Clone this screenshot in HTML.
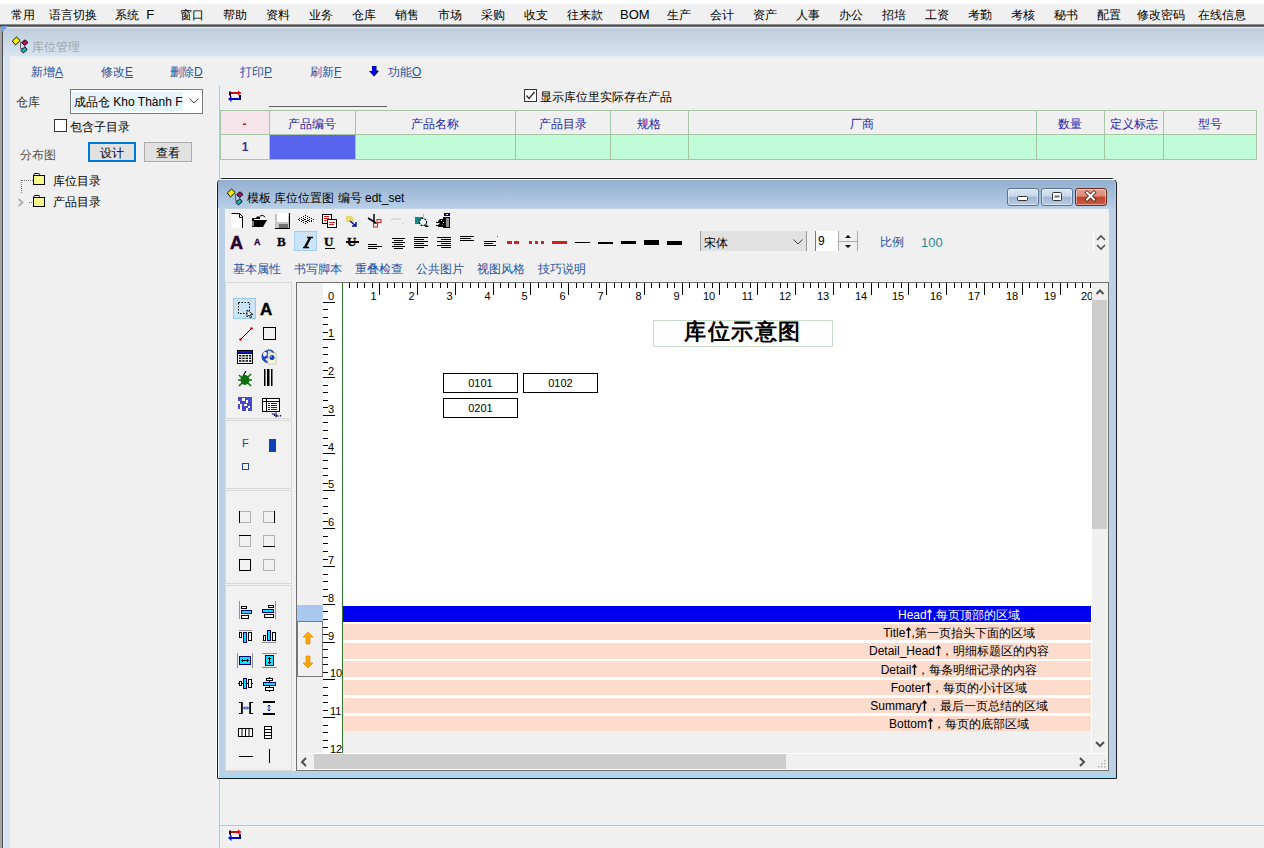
<!DOCTYPE html><html><head><meta charset="utf-8"><title>库位管理</title><style>
*{margin:0;padding:0;box-sizing:border-box}
html,body{width:1264px;height:848px;overflow:hidden;background:#f0f0f0;font-family:"Liberation Sans",sans-serif;font-size:12px;color:#000}
.a{position:absolute}
.t{line-height:12px;white-space:nowrap}
i.c{font-style:normal;font-family:"Liberation Sans",sans-serif;font-weight:normal;font-size:13px;letter-spacing:2.25px;-webkit-text-stroke:0.45px}
.cjk i.c{font-size:12px;letter-spacing:0;-webkit-text-stroke:0}
.cjk .tt{font:bold 22px/20px 'Liberation Serif',serif!important;letter-spacing:1.5px!important;-webkit-text-stroke:0!important}
u{text-decoration:underline}
b.ar{font-weight:normal;display:inline-block;position:relative;width:5px;height:11px;vertical-align:-1px;margin:0 0.5px}b.ar span{position:absolute;left:0;top:0;color:transparent;font-size:11px}b.ar svg{position:absolute;left:0;top:0}
svg{position:absolute;overflow:visible}
</style></head><body>
<div class=a style="left:0px;top:0px;width:1264px;height:4px;background:#fdfdfd;"></div>
<div class=a style="left:0px;top:4px;width:1264px;height:20px;background:#f0f0f0;"></div>
<div class="a t " style="left:11px;top:9px;font-size:13px"><i class=c>常用</i></div>
<div class="a t " style="left:49px;top:9px;font-size:13px"><i class=c>语言切换</i></div>
<div class="a t " style="left:115px;top:9px;font-size:13px"><i class=c>系统</i>&nbsp; F</div>
<div class="a t " style="left:180px;top:9px;font-size:13px"><i class=c>窗口</i></div>
<div class="a t " style="left:223px;top:9px;font-size:13px"><i class=c>帮助</i></div>
<div class="a t " style="left:266px;top:9px;font-size:13px"><i class=c>资料</i></div>
<div class="a t " style="left:309px;top:9px;font-size:13px"><i class=c>业务</i></div>
<div class="a t " style="left:352px;top:9px;font-size:13px"><i class=c>仓库</i></div>
<div class="a t " style="left:395px;top:9px;font-size:13px"><i class=c>销售</i></div>
<div class="a t " style="left:438px;top:9px;font-size:13px"><i class=c>市场</i></div>
<div class="a t " style="left:481px;top:9px;font-size:13px"><i class=c>采购</i></div>
<div class="a t " style="left:524px;top:9px;font-size:13px"><i class=c>收支</i></div>
<div class="a t " style="left:567px;top:9px;font-size:13px"><i class=c>往来款</i></div>
<div class="a t " style="left:620px;top:9px;font-size:13px">BOM</div>
<div class="a t " style="left:667px;top:9px;font-size:13px"><i class=c>生产</i></div>
<div class="a t " style="left:710px;top:9px;font-size:13px"><i class=c>会计</i></div>
<div class="a t " style="left:753px;top:9px;font-size:13px"><i class=c>资产</i></div>
<div class="a t " style="left:796px;top:9px;font-size:13px"><i class=c>人事</i></div>
<div class="a t " style="left:839px;top:9px;font-size:13px"><i class=c>办公</i></div>
<div class="a t " style="left:882px;top:9px;font-size:13px"><i class=c>招培</i></div>
<div class="a t " style="left:925px;top:9px;font-size:13px"><i class=c>工资</i></div>
<div class="a t " style="left:968px;top:9px;font-size:13px"><i class=c>考勤</i></div>
<div class="a t " style="left:1011px;top:9px;font-size:13px"><i class=c>考核</i></div>
<div class="a t " style="left:1054px;top:9px;font-size:13px"><i class=c>秘书</i></div>
<div class="a t " style="left:1097px;top:9px;font-size:13px"><i class=c>配置</i></div>
<div class="a t " style="left:1137px;top:9px;font-size:13px"><i class=c>修改密码</i></div>
<div class="a t " style="left:1198px;top:9px;font-size:13px"><i class=c>在线信息</i></div>
<div class=a style="left:0px;top:24px;width:1264px;height:1px;background:#8a8a8a;"></div>
<div class=a style="left:0px;top:25px;width:1264px;height:1px;background:#4e4e4e;"></div>
<div class=a style="left:0px;top:26px;width:1264px;height:1px;background:#6a6a6a;"></div>
<div class=a style="left:0px;top:27px;width:2px;height:821px;background:#a4a4a4;"></div>
<div class=a style="left:2px;top:27px;width:1px;height:821px;background:#4a4a4e;"></div>
<div class=a style="left:3px;top:27px;width:1px;height:821px;background:#e8f0fa;"></div>
<div class=a style="left:4px;top:27px;width:6px;height:821px;background:#d6e4f1;"></div>
<div class=a style="left:10px;top:57px;width:1px;height:791px;background:#eef0f4;"></div>
<div class=a style="left:3px;top:27px;width:1261px;height:1px;background:#e6eef6;"></div>
<div class=a style="left:3px;top:28px;width:1261px;height:29px;background:linear-gradient(#bdccdb,#d9e5f1);"></div>
<div class=a style="left:10px;top:56px;width:1254px;height:1px;background:#e4ecf4;"></div>
<svg style="left:2px;top:26px" width="6" height="6"><path d="M0 0H6L0 6Z" fill="#6f9bd8"/></svg>
<svg style="left:12px;top:36px" width="18" height="18" viewBox="0 0 18 18">
<path d="M8.5 6V12.5H10.5" stroke="#606060" fill="none" stroke-width="1"/>
<path d="M0.3 5L4.5 1L8.2 4.5L3.5 9Z" fill="#f4ec00" stroke="#000" stroke-width="0.9"/>
<path d="M9.6 6.6L13 3.8L16 6.5L12.7 9.6Z" fill="#b01060" stroke="#000" stroke-width="0.9"/>
<path d="M8.8 14.4L13 10.8L15.1 13.7L11.4 17Z" fill="#20b0b8" stroke="#000" stroke-width="0.9"/>
</svg>
<div class="a t " style="left:32px;top:41px;color:#9ca3ab"><i class=c>库位管理</i></div>
<div class="a t " style="left:31px;top:66px;color:#2553a3"><i class=c>新增</i><u>A</u></div>
<div class="a t " style="left:101px;top:66px;color:#2553a3"><i class=c>修改</i><u>E</u></div>
<div class="a t " style="left:170px;top:66px;color:#2553a3"><i class=c>删除</i><u>D</u></div>
<div class="a t " style="left:240px;top:66px;color:#2553a3"><i class=c>打印</i><u>P</u></div>
<div class="a t " style="left:310px;top:66px;color:#2553a3"><i class=c>刷新</i><u>F</u></div>
<svg style="left:369px;top:66px" width="10" height="11" viewBox="0 0 10 11"><path d="M3 0H7V5H10L5 10.5L0 5H3Z" fill="#0000e0"/><path d="M7 0V5H9L5 10" stroke="#000070" fill="none" stroke-width="1"/></svg>
<div class="a t " style="left:388px;top:66px;color:#2553a3"><i class=c>功能</i><u>O</u></div>
<div class="a t " style="left:16px;top:96px;color:#333"><i class=c>仓库</i></div>
<div class=a style="left:70px;top:89px;width:133px;height:25px;background:#fff;border:1px solid #7a7a7a"></div>
<div class=a style="left:72px;top:92px;width:111px;height:19px;background:#e5f3fb;"></div>
<div class="a t " style="left:74px;top:96px;color:#000"><i class=c>成品仓</i> Kho Thành F</div>
<div class=a style="left:183px;top:91px;width:18px;height:21px;background:#fff;"></div>
<svg style="left:189px;top:98px" width="10" height="6"><path d="M0.5 0.5L5 5L9.5 0.5" stroke="#404040" fill="none"/></svg>
<div class=a style="left:54px;top:119px;width:13px;height:13px;background:#fff;border:1px solid #333"></div>
<div class="a t " style="left:70px;top:121px;color:#000"><i class=c>包含子目录</i></div>
<div class="a t " style="left:20px;top:149px;color:#555"><i class=c>分布图</i></div>
<div class=a style="left:88px;top:142px;width:48px;height:20px;background:#e1e1e1;border:2px solid #0078d7"></div>
<div class="a t " style="left:100px;top:147px;"><i class=c>设计</i></div>
<div class=a style="left:144px;top:142px;width:48px;height:20px;background:#e1e1e1;border:1px solid #adadad"></div>
<div class="a t " style="left:156px;top:147px;"><i class=c>查看</i></div>
<svg style="left:0;top:0" width="60" height="220"><path d="M21.5 180V193M22 180.5H33M29 202.5H33" stroke="#707070" stroke-dasharray="1 1" fill="none"/><path d="M18.5 199L22.5 202.5L18.5 206" stroke="#b0b0b0" fill="none" stroke-width="1.8"/></svg>
<svg style="left:33px;top:173px" width="13" height="13" viewBox="0 0 13 13"><rect x="1" y="0.5" width="5.5" height="2" rx="0.8" fill="#fff" stroke="#000"/><rect x="0.5" y="2.5" width="11" height="9" fill="#f8f88a" stroke="#000"/></svg>
<div class="a t " style="left:53px;top:175px;"><i class=c>库位目录</i></div>
<svg style="left:33px;top:195px" width="13" height="13" viewBox="0 0 13 13"><rect x="1" y="0.5" width="5.5" height="2" rx="0.8" fill="#fff" stroke="#000"/><rect x="0.5" y="2.5" width="11" height="9" fill="#f8f88a" stroke="#000"/></svg>
<div class="a t " style="left:53px;top:196px;"><i class=c>产品目录</i></div>
<div class=a style="left:218px;top:86px;width:1px;height:762px;background:#e8f3fc;"></div>
<div class=a style="left:219px;top:86px;width:1px;height:762px;background:#b6c6d8;"></div>
<div class=a style="left:220px;top:824px;width:1044px;height:1px;background:#e8f3fc;"></div>
<div class=a style="left:220px;top:825px;width:1044px;height:1px;background:#b6c6d8;"></div>
<svg style="left:228px;top:90px" width="15" height="13" viewBox="0 0 15 13"><rect x="1" y="2" width="11" height="2" fill="#c01010"/><path d="M10 0.5L13.5 3L10 5.5Z" fill="#e01010"/><rect x="1" y="1.5" width="2" height="4" fill="#400000"/><rect x="2" y="8" width="11" height="2" fill="#0000c0"/><path d="M3.5 6L0 9L3.5 12Z" fill="#0010d0"/><rect x="11" y="5" width="2" height="5" fill="#000050"/><rect x="2" y="4" width="1" height="3" fill="#300030"/></svg>
<svg style="left:228px;top:829px" width="15" height="13" viewBox="0 0 15 13"><rect x="1" y="2" width="11" height="2" fill="#c01010"/><path d="M10 0.5L13.5 3L10 5.5Z" fill="#e01010"/><rect x="1" y="1.5" width="2" height="4" fill="#400000"/><rect x="2" y="8" width="11" height="2" fill="#0000c0"/><path d="M3.5 6L0 9L3.5 12Z" fill="#0010d0"/><rect x="11" y="5" width="2" height="5" fill="#000050"/><rect x="2" y="4" width="1" height="3" fill="#300030"/></svg>
<div class=a style="left:269px;top:106px;width:118px;height:1px;background:#606060;"></div>
<div class=a style="left:524px;top:89px;width:13px;height:13px;background:#fff;border:1px solid #333"></div>
<svg style="left:524px;top:89px" width="13" height="13"><path d="M2.5 6.5L5 9.5L10.5 3" stroke="#222" stroke-width="1.2" fill="none"/></svg>
<div class="a t " style="left:540px;top:91px;"><i class=c>显示库位里实际存在产品</i></div>
<div class=a style="left:221px;top:111px;width:48px;height:23px;background:#f6e4eb;"></div>
<div class=a style="left:270px;top:135px;width:85px;height:24px;background:#5964ee;"></div>
<div class=a style="left:356px;top:135px;width:900px;height:24px;background:#c0fcd8;"></div>
<div class=a style="left:220px;top:110px;width:1px;height:50px;background:#a6c6a6;"></div>
<div class=a style="left:269px;top:110px;width:1px;height:50px;background:#a6c6a6;"></div>
<div class=a style="left:355px;top:110px;width:1px;height:50px;background:#a6c6a6;"></div>
<div class=a style="left:515px;top:110px;width:1px;height:50px;background:#a6c6a6;"></div>
<div class=a style="left:610px;top:110px;width:1px;height:50px;background:#a6c6a6;"></div>
<div class=a style="left:688px;top:110px;width:1px;height:50px;background:#a6c6a6;"></div>
<div class=a style="left:1036px;top:110px;width:1px;height:50px;background:#a6c6a6;"></div>
<div class=a style="left:1104px;top:110px;width:1px;height:50px;background:#a6c6a6;"></div>
<div class=a style="left:1163px;top:110px;width:1px;height:50px;background:#a6c6a6;"></div>
<div class=a style="left:1256px;top:110px;width:1px;height:50px;background:#a6c6a6;"></div>
<div class=a style="left:220px;top:110px;width:1037px;height:1px;background:#a6c6a6;"></div>
<div class=a style="left:220px;top:134px;width:1037px;height:1px;background:#a6c6a6;"></div>
<div class=a style="left:220px;top:159px;width:1037px;height:1px;background:#a6c6a6;"></div>
<div class="a t" style="left:220px;top:118px;width:49px;text-align:center;color:#c02020;font-weight:bold">-</div>
<div class="a t" style="left:269px;top:118px;width:86px;text-align:center;color:#2a20a8"><i class=c>产品编号</i></div>
<div class="a t" style="left:355px;top:118px;width:160px;text-align:center;color:#2a20a8"><i class=c>产品名称</i></div>
<div class="a t" style="left:515px;top:118px;width:95px;text-align:center;color:#2a20a8"><i class=c>产品目录</i></div>
<div class="a t" style="left:610px;top:118px;width:78px;text-align:center;color:#2a20a8"><i class=c>规格</i></div>
<div class="a t" style="left:688px;top:118px;width:348px;text-align:center;color:#2a20a8"><i class=c>厂商</i></div>
<div class="a t" style="left:1036px;top:118px;width:68px;text-align:center;color:#2a20a8"><i class=c>数量</i></div>
<div class="a t" style="left:1104px;top:118px;width:59px;text-align:center;color:#2a20a8"><i class=c>定义标志</i></div>
<div class="a t" style="left:1163px;top:118px;width:93px;text-align:center;color:#2a20a8"><i class=c>型号</i></div>
<div class="a t" style="left:221px;top:141px;width:48px;text-align:center;color:#3a3090;font-weight:bold">1</div>
<div class=a style="left:223px;top:177px;width:888px;height:1px;background:#fbfbfb;"></div>
<div class=a style="left:216px;top:184px;width:1px;height:594px;background:#fbfdff;"></div>
<div class=a style="left:217px;top:178px;width:900px;height:601px;border:1px solid #1c1c1c;border-radius:6px 6px 1px 1px;background:#bad1e8;box-shadow:inset 1px 1px 0 #f4f9ff, inset -1px 0 0 #9fdcf6"></div>
<div class=a style="left:218px;top:179px;width:898px;height:1px;background:#f4f9ff;"></div>
<div class=a style="left:218px;top:180px;width:897px;height:28px;background:linear-gradient(#93aecf,#b7cee7);border-radius:4px 4px 0 0"></div>
<div class=a style="left:219px;top:208px;width:896px;height:1px;background:#c0d2e6;"></div>
<div class=a style="left:225px;top:209px;width:884px;height:562px;background:#f0f0f0;"></div>
<div class=a style="left:225px;top:209px;width:884px;height:1px;background:#eef2fa;"></div>
<svg style="left:227px;top:188px" width="18" height="18" viewBox="0 0 18 18">
<path d="M8.5 6V12.5H10.5" stroke="#606060" fill="none" stroke-width="1"/>
<path d="M0.3 5L4.5 1L8.2 4.5L3.5 9Z" fill="#f4ec00" stroke="#000" stroke-width="0.9"/>
<path d="M9.6 6.6L13 3.8L16 6.5L12.7 9.6Z" fill="#b01060" stroke="#000" stroke-width="0.9"/>
<path d="M8.8 14.4L13 10.8L15.1 13.7L11.4 17Z" fill="#20b0b8" stroke="#000" stroke-width="0.9"/>
</svg>
<div class="a t " style="left:247px;top:192px;"><i class=c>模板</i> <i class=c>库位位置图</i> <i class=c>编号</i> edt_set</div>
<div class=a style="left:1007px;top:188px;width:32px;height:18px;background:linear-gradient(#dbe6f3 0%,#c8d8ea 45%,#9fb7d3 50%,#b9cde4 100%);border:1px solid #5c7394;border-radius:3px;box-shadow:inset 0 0 0 1px rgba(255,255,255,.45)"></div>
<div class=a style="left:1041px;top:188px;width:32px;height:18px;background:linear-gradient(#dbe6f3 0%,#c8d8ea 45%,#9fb7d3 50%,#b9cde4 100%);border:1px solid #5c7394;border-radius:3px;box-shadow:inset 0 0 0 1px rgba(255,255,255,.45)"></div>
<div class=a style="left:1075px;top:188px;width:32px;height:18px;background:linear-gradient(#e6a193 0%,#d88a78 45%,#c0442a 50%,#c85a40 100%);border:1px solid #6a2a20;border-radius:3px;box-shadow:inset 0 0 0 1px rgba(255,255,255,.45)"></div>
<svg style="left:1017px;top:196px" width="12" height="6"><rect x="0.5" y="0.5" width="10" height="4" rx="1" fill="#fff" stroke="#333"/></svg>
<svg style="left:1051px;top:192px" width="12" height="10"><rect x="1.5" y="0.5" width="9" height="8" rx="1" fill="#fff" stroke="#333"/><rect x="3.5" y="3.5" width="5" height="2" fill="#5a6f8a"/></svg>
<svg style="left:1084px;top:190px" width="14" height="12"><path d="M3 2.5L10 9.5M10 2.5L3 9.5" stroke="#4a1a10" stroke-width="3.6" stroke-linecap="square"/><path d="M3 2.5L10 9.5M10 2.5L3 9.5" stroke="#fff" stroke-width="2" stroke-linecap="square"/></svg>
<div class=a style="left:1093px;top:232px;width:1px;height:20px;background:#ffffff;"></div>
<svg style="left:1096px;top:234px" width="10" height="18"><path d="M1 6L5 2L9 6M1 11L5 15L9 11" stroke="#505050" stroke-width="1.6" fill="none"/></svg>
<svg style="left:231px;top:213px" width="13" height="16" viewBox="0 0 13 16"><path d="M0.5 1.5H8.5L11.5 4.5V14.5H0.5Z" fill="#fff"/><path d="M0.5 0.5H8.5M8.5 0.5V4.5H12M8.5 0.5L12 4M11.5 4V15" stroke="#000" fill="none"/></svg>
<svg style="left:251px;top:214px" width="17" height="14" viewBox="0 0 17 14"><path d="M1 4H5L6 2.5H9V5H14L11 13H1Z" fill="#000"/><path d="M3 6H16L12 13H1Z" fill="#000"/><path d="M3 5.5H15" stroke="#fff"/><path d="M9 2Q12 0 14 3" stroke="#000" fill="none"/><path d="M2 7V12" stroke="#fff"/></svg>
<svg style="left:275px;top:213px" width="16" height="16" viewBox="0 0 16 16"><rect x="0" y="1" width="15" height="14" fill="#c4c4c4"/><rect x="2" y="0" width="11" height="9" fill="#fff"/><rect x="4" y="11" width="9" height="4" fill="#707070"/><path d="M14.5 0V15.5H0" stroke="#000" fill="none"/></svg>
<svg style="left:298px;top:215px" width="16" height="10" viewBox="0 0 16 10"><g fill="#000"><rect x="7" y="0" width="1" height="1"/><rect x="5" y="1" width="1" height="1"/><rect x="9" y="1" width="1" height="1"/><rect x="3" y="2" width="1" height="1"/><rect x="7" y="2" width="1" height="1"/><rect x="11" y="2" width="1" height="1"/><rect x="1" y="3" width="1" height="1"/><rect x="5" y="3" width="1" height="1"/><rect x="9" y="3" width="1" height="1"/><rect x="13" y="3" width="1" height="1"/><rect x="0" y="4" width="1" height="1"/><rect x="3" y="4" width="1" height="1"/><rect x="7" y="4" width="1" height="1"/><rect x="11" y="4" width="1" height="1"/><rect x="15" y="4" width="1" height="1"/><rect x="1" y="5" width="1" height="1"/><rect x="5" y="5" width="1" height="1"/><rect x="9" y="5" width="1" height="1"/><rect x="13" y="5" width="1" height="1"/><rect x="3" y="6" width="1" height="1"/><rect x="7" y="6" width="1" height="1"/><rect x="11" y="6" width="1" height="1"/><rect x="5" y="7" width="1" height="1"/><rect x="9" y="7" width="1" height="1"/><rect x="13" y="6" width="1" height="1"/><rect x="7" y="8" width="1" height="1"/><rect x="4" y="5" width="1" height="1"/><rect x="10" y="5" width="1" height="1"/><rect x="6" y="4" width="1" height="1"/><rect x="8" y="6" width="1" height="1"/></g></svg>
<svg style="left:322px;top:214px" width="15" height="14" viewBox="0 0 15 14"><rect x="0.5" y="0.5" width="9" height="9" fill="#fff" stroke="#000"/><path d="M2 2.5H7M2 4.5H7M2 6.5H5" stroke="#d02020"/><rect x="5.5" y="5.5" width="9" height="8" fill="#fff" stroke="#000"/><path d="M7 8.5H13M7 10.5H12" stroke="#d02020"/></svg>
<svg style="left:346px;top:216px" width="11" height="11" viewBox="0 0 11 11"><path d="M0 0H6L8 3V6H0Z" fill="#e8d870"/><path d="M4 5L10 10M6 10H10V6" stroke="#0010a0" stroke-width="1.5" fill="none"/></svg>
<svg style="left:368px;top:214px" width="14" height="14" viewBox="0 0 14 14"><path d="M6 0V9M0 4L8 9" stroke="#000" stroke-width="1.5"/><rect x="9" y="5.5" width="4" height="3" fill="none" stroke="#d02020"/><rect x="5.5" y="9.5" width="4" height="3.5" fill="none" stroke="#d02020"/></svg>
<svg style="left:391px;top:218px" width="14" height="7" viewBox="0 0 14 7"><path d="M0 3L2 1H10M12 4V6" stroke="#c8c8c8" fill="none"/></svg>
<svg style="left:414px;top:214px" width="15" height="15" viewBox="0 0 15 15"><rect x="1" y="3" width="8" height="7" fill="#108888"/><path d="M9.5 0V3" stroke="#b0b0b0"/><circle cx="9" cy="8" r="3.6" fill="#e8fafa" stroke="#000" stroke-width="1.1" stroke-dasharray="2 1"/><path d="M11.5 10.5L13.5 12.5H11" stroke="#000" stroke-width="1.2" fill="none"/></svg>
<svg style="left:435px;top:213px" width="16" height="16" viewBox="0 0 16 16"><path d="M9 0H15V3H9Z" fill="#000070"/><rect x="11" y="1" width="2" height="1" fill="#fff"/><path d="M8 4H15V15H8Z" fill="#000"/><rect x="11" y="5" width="3" height="9" fill="#909090"/><path d="M5 6H9V10L7 12H8V14H3V12L5 10H3V8Z" fill="#000"/><rect x="6" y="7" width="1" height="1" fill="#fff"/><rect x="8" y="9" width="1" height="1" fill="#fff"/><rect x="1" y="9" width="2" height="1" fill="#000"/><rect x="1" y="12" width="2" height="1" fill="#000"/></svg>
<div class=a style="left:294px;top:231px;width:23px;height:20px;background:#cce4f7;border:1px solid #a6cdee"></div>
<div class="a" style="left:230px;top:235px;font:bold 18px/16px 'Liberation Sans',sans-serif;color:#1a0028;-webkit-text-stroke:0.6px #400040">A</div>
<div class="a" style="left:254px;top:238px;font:bold 9px/9px 'Liberation Sans',sans-serif;color:#300040;-webkit-text-stroke:0.3px">A</div>
<div class="a" style="left:277px;top:236px;font:bold 13px/12px 'Liberation Serif',serif;color:#000;-webkit-text-stroke:0.3px">B</div>
<svg style="left:302px;top:237px" width="12" height="11" viewBox="0 0 12 11"><path d="M5 0.5H11M1 10.5H7M8.5 0.5L3.5 10.5" stroke="#000" stroke-width="1.4" fill="none"/><path d="M8 1L3 10" stroke="#000" stroke-width="2.2"/></svg>
<div class="a" style="left:324px;top:236px;font:bold 13px/12px 'Liberation Serif',serif;color:#000;-webkit-text-stroke:0.3px">U</div>
<div class=a style="left:325px;top:248px;width:10px;height:1px;background:#000;"></div>
<div class="a" style="left:347px;top:236px;font:bold 13px/12px 'Liberation Serif',serif;color:#000;-webkit-text-stroke:0.3px">U</div>
<div class=a style="left:346px;top:241px;width:13px;height:2px;background:#000;"></div>
<svg style="left:368px;top:244px" width="14" height="6" viewBox="0 0 14 6"><path d="M0 0.5H9M0 2.5H14M0 4.5H9" stroke="#000"/></svg>
<svg style="left:391px;top:238px" width="14" height="11" viewBox="0 0 14 11"><path d="M1 0.5H14M3 2.5H12M1 4.5H14M3 6.5H12M1 8.5H14M3 10.5H12" stroke="#000"/></svg>
<svg style="left:414px;top:237px" width="14" height="11" viewBox="0 0 14 11"><path d="M0 0.5H14M0 2.5H10M0 4.5H14M0 6.5H10M0 8.5H14M0 10.5H10" stroke="#000"/></svg>
<svg style="left:437px;top:237px" width="14" height="11" viewBox="0 0 14 11"><path d="M0 0.5H14M4 2.5H14M0 4.5H14M4 6.5H14M0 8.5H14M4 10.5H14" stroke="#000"/></svg>
<svg style="left:460px;top:236px" width="14" height="6" viewBox="0 0 14 6"><path d="M0 0.5H14M0 2.5H11M0 4.5H14" stroke="#000"/></svg>
<svg style="left:484px;top:240px" width="13" height="7" viewBox="0 0 13 7"><path d="M0 1.5H12M0 3.5H9M0 5.5H12" stroke="#000"/></svg>
<div class=a style="left:497px;top:236px;width:1px;height:1px;background:#c01080;"></div>
<svg style="left:507px;top:241px" width="12" height="3" viewBox="0 0 12 3"><rect x="0" y="0" width="5" height="3" fill="#d02020"/><rect x="7" y="0" width="5" height="3" fill="#d02020"/></svg>
<svg style="left:529px;top:241px" width="15" height="3" viewBox="0 0 15 3"><rect x="0" y="0" width="3" height="3" fill="#d02020"/><rect x="6" y="0" width="3" height="3" fill="#d02020"/><rect x="12" y="0" width="3" height="3" fill="#d02020"/></svg>
<div class=a style="left:552px;top:241px;width:15px;height:3px;background:#d02020;"></div>
<div class=a style="left:575px;top:242px;width:15px;height:1px;background:#000;"></div>
<div class=a style="left:598px;top:242px;width:15px;height:2px;background:#000;"></div>
<div class=a style="left:621px;top:241px;width:15px;height:3px;background:#000;"></div>
<div class=a style="left:644px;top:240px;width:15px;height:5px;background:#000;"></div>
<div class=a style="left:667px;top:241px;width:15px;height:4px;background:#000;"></div>
<div class=a style="left:700px;top:231px;width:107px;height:20px;background:#e1e1e1;border-left:1px solid #9a9a9a;border-right:1px solid #9a9a9a"></div>
<div class="a t" style="left:704px;top:237px;font-weight:bold"><i class=c>宋体</i></div>
<svg style="left:793px;top:239px" width="10" height="6" viewBox="0 0 10 6"><path d="M0.5 0.5L5 5L9.5 0.5" stroke="#404040" fill="none"/></svg>
<div class=a style="left:815px;top:231px;width:23px;height:20px;background:#fff;border-left:1px solid #7a7a7a"></div>
<div class="a t " style="left:818px;top:235px;">9</div>
<div class=a style="left:838px;top:231px;width:20px;height:20px;background:#f0f0f0;border-left:1px solid #aaa;border-right:1px solid #aaa"></div>
<div class=a style="left:839px;top:241px;width:18px;height:1px;background:#aaa;"></div>
<svg style="left:844px;top:234px" width="8" height="5" viewBox="0 0 8 5"><path d="M1 4L4 1L7 4Z" fill="#000"/></svg>
<svg style="left:844px;top:244px" width="8" height="5" viewBox="0 0 8 5"><path d="M1 1L4 4L7 1Z" fill="#000"/></svg>
<div class="a t " style="left:880px;top:236px;color:#2553a3"><i class=c>比例</i></div>
<div class="a t " style="left:921px;top:237px;color:#2a8a90;font-size:13px">100</div>
<div class="a t " style="left:233px;top:263px;color:#2553a3"><i class=c>基本属性</i></div>
<div class="a t " style="left:294px;top:263px;color:#2553a3"><i class=c>书写脚本</i></div>
<div class="a t " style="left:355px;top:263px;color:#2553a3"><i class=c>重叠检查</i></div>
<div class="a t " style="left:416px;top:263px;color:#2553a3"><i class=c>公共图片</i></div>
<div class="a t " style="left:477px;top:263px;color:#2553a3"><i class=c>视图风格</i></div>
<div class="a t " style="left:538px;top:263px;color:#2553a3"><i class=c>技巧说明</i></div>
<div class=a style="left:225px;top:282px;width:67px;height:137px;border:1px solid #d8d8d8;background:#f1f1f1"></div>
<div class=a style="left:225px;top:420px;width:67px;height:69px;border:1px solid #d8d8d8;background:#f1f1f1"></div>
<div class=a style="left:225px;top:490px;width:67px;height:94px;border:1px solid #d8d8d8;background:#f1f1f1"></div>
<div class=a style="left:225px;top:585px;width:67px;height:186px;border:1px solid #d8d8d8;background:#f1f1f1"></div>
<div class=a style="left:233px;top:298px;width:23px;height:21px;background:#cce4f7;border:1px solid #99c9ef"></div>
<svg style="left:238px;top:302px" width="16" height="16" viewBox="0 0 16 16"><rect x="0.5" y="0.5" width="11" height="11" fill="none" stroke="#000" stroke-dasharray="1.5 1.5"/><path d="M9 8V15L11 13L12.5 16L13.5 15.5L12.5 12.5H15Z" fill="#fff" stroke="#000" stroke-width="0.8"/></svg>
<div class="a" style="left:260px;top:302px;font:bold 17px/15px 'Liberation Sans',sans-serif;color:#000;-webkit-text-stroke:0.4px">A</div>
<svg style="left:239px;top:327px" width="14" height="14" viewBox="0 0 14 14"><path d="M1.5 12.5L12.5 1.5" stroke="#000"/><circle cx="1.5" cy="12.5" r="1.3" fill="#c01010"/><circle cx="12.5" cy="1.5" r="1.3" fill="#c01010"/></svg>
<svg style="left:263px;top:327px" width="14" height="13" viewBox="0 0 14 13"><rect x="0.5" y="0.5" width="12" height="12" fill="none" stroke="#000"/></svg>
<svg style="left:237px;top:350px" width="17" height="15" viewBox="0 0 17 15"><rect x="0.5" y="0.5" width="15" height="13" fill="#fff" stroke="#000"/><rect x="1" y="1" width="14" height="2" fill="#1018c0"/><rect x="1" y="3" width="14" height="1" fill="#000"/><rect x="2.0" y="5.0" width="2.4" height="1.5" fill="#000"/><rect x="5.3" y="5.0" width="2.4" height="1.5" fill="#000"/><rect x="8.6" y="5.0" width="2.4" height="1.5" fill="#000"/><rect x="11.9" y="5.0" width="2.4" height="1.5" fill="#000"/><rect x="2.0" y="7.6" width="2.4" height="1.5" fill="#000"/><rect x="5.3" y="7.6" width="2.4" height="1.5" fill="#000"/><rect x="8.6" y="7.6" width="2.4" height="1.5" fill="#000"/><rect x="11.9" y="7.6" width="2.4" height="1.5" fill="#000"/><rect x="2.0" y="10.2" width="2.4" height="1.5" fill="#000"/><rect x="5.3" y="10.2" width="2.4" height="1.5" fill="#000"/><rect x="8.6" y="10.2" width="2.4" height="1.5" fill="#000"/><rect x="11.9" y="10.2" width="2.4" height="1.5" fill="#000"/></svg>
<svg style="left:261px;top:349px" width="16" height="16" viewBox="0 0 16 16"><path d="M7 1A6.5 6.5 0 1 0 7 14Z" fill="#2040d0"/><path d="M3 3Q6 2 6 6L3 8Q1 5 3 3Z" fill="#f0f0ff"/><path d="M4 10L7 9V13Z" fill="#fff"/><path d="M7 1Q11 1 13 4" stroke="#3060a0" stroke-width="1.5" fill="none"/><rect x="7" y="4" width="8" height="11" fill="#fbf6d0" stroke="#b0b0b0" stroke-width="0.6"/><circle cx="11" cy="8.5" r="2.5" fill="#1040c0"/><circle cx="10.3" cy="7.8" r="0.8" fill="#a0c0ff"/></svg>
<svg style="left:238px;top:371px" width="14" height="16" viewBox="0 0 14 16"><path d="M8 0L5 5" stroke="#000" stroke-width="1.2"/><ellipse cx="7" cy="9" rx="4.5" ry="5" fill="#107010"/><path d="M1 4L4 7M13 3L10 6M0 9H3M11 9H14M1 15L4 12M13 15L10 12" stroke="#107010" stroke-width="1.6"/></svg>
<svg style="left:264px;top:369px" width="9" height="17" viewBox="0 0 9 17"><rect x="0" y="0" width="1.5" height="17" fill="#000"/><rect x="3" y="0" width="2.5" height="17" fill="#000"/><rect x="7" y="0" width="1.5" height="17" fill="#000"/></svg>
<svg style="left:238px;top:397px" width="14" height="14" viewBox="0 0 14 14"><rect x="0" y="0" width="14" height="14" fill="#4848c8"/><rect x="0" y="4" width="2" height="3" fill="#fff"/><rect x="4" y="1" width="3" height="3" fill="#fff"/><rect x="8" y="3" width="2" height="3" fill="#fff"/><rect x="2" y="7" width="2" height="7" fill="#fff"/><rect x="6" y="7" width="3" height="2" fill="#fff"/><rect x="10" y="9" width="2" height="2" fill="#fff"/><rect x="0" y="12" width="2" height="2" fill="#f0f0f0"/><rect x="8" y="11" width="2" height="3" fill="#fff"/></svg>
<svg style="left:262px;top:398px" width="19" height="20" viewBox="0 0 19 20"><rect x="0.5" y="0.5" width="17" height="13" fill="#fff" stroke="#000"/><path d="M1 3.5H17M4.5 1V13" stroke="#000"/><path d="M6 5.5H8M9 5.5H15M6 7.5H8M9 7.5H15M6 9.5H8M9 9.5H15M6 11.5H8M9 11.5H15" stroke="#1a1a8a"/><path d="M10 16.5Q11 15 12.5 16.5V18M14 14.5V18.5Q16 17 16.5 18.5M18.5 17V18.5" stroke="#101060" stroke-width="1.2" fill="none"/></svg>
<div class="a" style="left:242px;top:437px;font:11px/13px 'Liberation Sans',sans-serif;color:#2040a0">F</div>
<div class=a style="left:269px;top:439px;width:7px;height:13px;background:#1040b8;"></div>
<svg style="left:242px;top:463px" width="7" height="8" viewBox="0 0 7 8"><rect x="0.5" y="0.5" width="6" height="6" fill="none" stroke="#2040a0"/></svg>
<svg style="left:239px;top:511px" width="13" height="13" viewBox="0 0 13 13"><rect x="0.5" y="0.5" width="11" height="11" fill="none" stroke="#707070" stroke-dasharray="1 1"/><path d="M0.5 0V12" stroke="#000"/></svg>
<svg style="left:263px;top:511px" width="13" height="13" viewBox="0 0 13 13"><rect x="0.5" y="0.5" width="11" height="11" fill="none" stroke="#707070" stroke-dasharray="1 1"/><path d="M11.5 0V12" stroke="#000"/></svg>
<svg style="left:239px;top:535px" width="13" height="13" viewBox="0 0 13 13"><rect x="0.5" y="0.5" width="11" height="11" fill="none" stroke="#707070" stroke-dasharray="1 1"/><path d="M0 0.5H12" stroke="#000"/></svg>
<svg style="left:263px;top:535px" width="13" height="13" viewBox="0 0 13 13"><rect x="0.5" y="0.5" width="11" height="11" fill="none" stroke="#707070" stroke-dasharray="1 1"/><path d="M0 11.5H12" stroke="#000"/></svg>
<svg style="left:239px;top:559px" width="13" height="13" viewBox="0 0 13 13"><rect x="0.5" y="0.5" width="11" height="11" fill="none" stroke="#707070" stroke-dasharray="1 1"/><path d="M0.5 0V12" stroke="#000"/><path d="M11.5 0V12" stroke="#000"/><path d="M0 0.5H12" stroke="#000"/><path d="M0 11.5H12" stroke="#000"/></svg>
<svg style="left:263px;top:559px" width="13" height="13" viewBox="0 0 13 13"><rect x="0.5" y="0.5" width="11" height="11" fill="none" stroke="#707070" stroke-dasharray="1 1"/></svg>
<svg style="left:239px;top:605px" width="15" height="15" viewBox="0 0 15 15"><path d="M0.5 -4V14" stroke="#909090"/><rect x="2.5" y="1.5" width="5.0" height="2.0" fill="#fff" stroke="#000"/><rect x="2.5" y="5.5" width="10.0" height="3.0" fill="#10e0ff" stroke="#000070"/><rect x="2.5" y="10.5" width="7.0" height="3.0" fill="#fff" stroke="#000"/></svg>
<svg style="left:262px;top:605px" width="15" height="15" viewBox="0 0 15 15"><path d="M13.5 -4V14" stroke="#909090"/><rect x="6.5" y="0.5" width="5.0" height="2.0" fill="#fff" stroke="#000"/><rect x="0.5" y="4.5" width="11.0" height="3.0" fill="#10e0ff" stroke="#000070"/><rect x="2.5" y="9.5" width="9.0" height="3.0" fill="#fff" stroke="#000"/></svg>
<svg style="left:239px;top:630px" width="15" height="15" viewBox="0 0 15 15"><path d="M0 0.5H13" stroke="#909090"/><rect x="0.5" y="2.5" width="2.0" height="5.0" fill="#fff" stroke="#000"/><rect x="4.5" y="2.5" width="3.0" height="10.0" fill="#10e0ff" stroke="#000070"/><rect x="9.5" y="2.5" width="3.0" height="8.0" fill="#fff" stroke="#000"/></svg>
<svg style="left:262px;top:630px" width="15" height="15" viewBox="0 0 15 15"><path d="M0 12.5H14" stroke="#909090"/><rect x="1.5" y="5.5" width="2.0" height="5.0" fill="#fff" stroke="#000"/><rect x="5.5" y="0.5" width="3.0" height="10.0" fill="#10e0ff" stroke="#000070"/><rect x="10.5" y="2.5" width="3.0" height="8.0" fill="#fff" stroke="#000"/></svg>
<svg style="left:237px;top:653px" width="17" height="16" viewBox="0 0 17 16"><path d="M0.5 0V15M15.5 0V15" stroke="#909090"/><rect x="2.5" y="3.5" width="11.0" height="8.0" fill="#10e0ff" stroke="#000070"/><path d="M4.5 7.5H11.5M6 6L4.5 7.5L6 9M10 6L11.5 7.5L10 9" stroke="#000" fill="none"/></svg>
<svg style="left:262px;top:653px" width="16" height="16" viewBox="0 0 16 16"><path d="M0 0.5H15M0 14.5H15" stroke="#909090"/><rect x="3.5" y="2.5" width="8.0" height="10.0" fill="#10e0ff" stroke="#000070"/><path d="M7.5 4.5V10.5M6 6L7.5 4.5L9 6M6 9L7.5 10.5L9 9" stroke="#000" fill="none"/></svg>
<svg style="left:238px;top:678px" width="16" height="12" viewBox="0 0 16 12"><path d="M0 5.5H15" stroke="#000"/><rect x="1.5" y="3.5" width="2.0" height="4.0" fill="#fff" stroke="#000"/><rect x="5.5" y="0.5" width="3.0" height="10.0" fill="#10e0ff" stroke="#000070"/><rect x="10.5" y="1.5" width="3.0" height="8.0" fill="#fff" stroke="#000"/></svg>
<svg style="left:262px;top:677px" width="15" height="16" viewBox="0 0 15 16"><path d="M7.5 0V15" stroke="#000"/><rect x="4.5" y="1.5" width="6.0" height="2.0" fill="#fff" stroke="#000"/><rect x="1.5" y="5.5" width="12.0" height="3.0" fill="#10e0ff" stroke="#000070"/><rect x="3.5" y="10.5" width="8.0" height="3.0" fill="#fff" stroke="#000"/></svg>
<svg style="left:239px;top:701px" width="14" height="14" viewBox="0 0 14 14"><path d="M0 1.5H3V12.5H0M14 1.5H11V12.5H14" stroke="#000" stroke-width="1.2" fill="none"/><rect x="2" y="1" width="1.5" height="12" fill="#000"/><rect x="10.5" y="1" width="1.5" height="12" fill="#000"/><path d="M5 7H9M6 5.5L4.5 7L6 8.5M8 5.5L9.5 7L8 8.5" stroke="#1030a0" fill="none"/></svg>
<svg style="left:262px;top:701px" width="14" height="14" viewBox="0 0 14 14"><rect x="1" y="0" width="12" height="2" fill="#000"/><rect x="1" y="12" width="12" height="2" fill="#000"/><path d="M7 4V10M5.5 5.5L7 4L8.5 5.5M5.5 8.5L7 10L8.5 8.5" stroke="#1030a0" fill="none"/></svg>
<svg style="left:238px;top:728px" width="16" height="10" viewBox="0 0 16 10"><rect x="0.5" y="0.5" width="14" height="8" fill="#fff" stroke="#000"/><path d="M4 1V9M7.5 1V9M11 1V9" stroke="#000"/></svg>
<svg style="left:264px;top:726px" width="9" height="13" viewBox="0 0 9 13"><rect x="0.5" y="0.5" width="7" height="12" fill="#fff" stroke="#000"/><path d="M1 3.5H8M1 6.5H8M1 9.5H8" stroke="#000"/></svg>
<div class=a style="left:239px;top:756px;width:14px;height:1px;background:#000;"></div>
<div class=a style="left:269px;top:749px;width:1px;height:14px;background:#000;"></div>
<div class=a style="left:296px;top:282px;width:813px;height:489px;background:#fff;border:1px solid #707070"></div>
<div class=a style="left:297px;top:283px;width:26px;height:470px;background:#f0f0f0;"></div>
<div class=a style="left:343px;top:731px;width:749px;height:22px;background:#f0f0f0;"></div>
<div class=a style="left:342px;top:283px;width:1px;height:470px;background:#2f7a2f;"></div>
<svg style="left:0;top:0" width="1264" height="848"><path d="M349.5 283V288M357.5 283V288M364.5 283V288M372.5 283V288M379.5 283V295M387.5 283V288M394.5 283V288M402.5 283V288M410.5 283V288M417.5 283V295M425.5 283V288M432.5 283V288M440.5 283V288M447.5 283V288M455.5 283V295M462.5 283V288M470.5 283V288M478.5 283V288M485.5 283V288M493.5 283V295M500.5 283V288M508.5 283V288M515.5 283V288M523.5 283V288M530.5 283V295M538.5 283V288M546.5 283V288M553.5 283V288M561.5 283V288M568.5 283V295M576.5 283V288M583.5 283V288M591.5 283V288M599.5 283V288M606.5 283V295M614.5 283V288M621.5 283V288M629.5 283V288M636.5 283V288M644.5 283V295M651.5 283V288M659.5 283V288M667.5 283V288M674.5 283V288M682.5 283V295M689.5 283V288M697.5 283V288M704.5 283V288M712.5 283V288M719.5 283V295M727.5 283V288M735.5 283V288M742.5 283V288M750.5 283V288M757.5 283V295M765.5 283V288M772.5 283V288M780.5 283V288M787.5 283V288M795.5 283V295M803.5 283V288M810.5 283V288M818.5 283V288M825.5 283V288M833.5 283V295M840.5 283V288M848.5 283V288M856.5 283V288M863.5 283V288M871.5 283V295M878.5 283V288M886.5 283V288M893.5 283V288M901.5 283V288M908.5 283V295M916.5 283V288M924.5 283V288M931.5 283V288M939.5 283V288M946.5 283V295M954.5 283V288M961.5 283V288M969.5 283V288M976.5 283V288M984.5 283V295M992.5 283V288M999.5 283V288M1007.5 283V288M1014.5 283V288M1022.5 283V295M1029.5 283V288M1037.5 283V288M1044.5 283V288M1052.5 283V288M1060.5 283V295M1067.5 283V288M1075.5 283V288M1082.5 283V288M1090.5 283V288M323 302.5H335M323 309.5H328M323 317.5H328M323 324.5H328M323 332.5H328M323 339.5H335M323 347.5H328M323 354.5H328M323 362.5H328M323 370.5H328M323 377.5H335M323 385.5H328M323 392.5H328M323 400.5H328M323 407.5H328M323 415.5H335M323 422.5H328M323 430.5H328M323 438.5H328M323 445.5H328M323 453.5H335M323 460.5H328M323 468.5H328M323 475.5H328M323 483.5H328M323 490.5H335M323 498.5H328M323 506.5H328M323 513.5H328M323 521.5H328M323 528.5H335M323 536.5H328M323 543.5H328M323 551.5H328M323 559.5H328M323 566.5H335M323 574.5H328M323 581.5H328M323 589.5H328M323 596.5H328M323 604.5H335M323 611.5H328M323 619.5H328M323 627.5H328M323 634.5H328M323 642.5H335M323 649.5H328M323 657.5H328M323 664.5H328M323 672.5H328M323 679.5H335M323 687.5H328M323 695.5H328M323 702.5H328M323 710.5H328M323 717.5H335M323 725.5H328M323 732.5H328M323 740.5H328M323 747.5H328" stroke="#000" stroke-width="1" fill="none"/></svg>
<div class="a" style="left:336.5px;top:291px;width:40px;text-align:right;font:11px/11px 'Liberation Sans',sans-serif;color:#000">1</div>
<div class="a" style="left:374.5px;top:291px;width:40px;text-align:right;font:11px/11px 'Liberation Sans',sans-serif;color:#000">2</div>
<div class="a" style="left:412.5px;top:291px;width:40px;text-align:right;font:11px/11px 'Liberation Sans',sans-serif;color:#000">3</div>
<div class="a" style="left:450.5px;top:291px;width:40px;text-align:right;font:11px/11px 'Liberation Sans',sans-serif;color:#000">4</div>
<div class="a" style="left:487.5px;top:291px;width:40px;text-align:right;font:11px/11px 'Liberation Sans',sans-serif;color:#000">5</div>
<div class="a" style="left:525.5px;top:291px;width:40px;text-align:right;font:11px/11px 'Liberation Sans',sans-serif;color:#000">6</div>
<div class="a" style="left:563.5px;top:291px;width:40px;text-align:right;font:11px/11px 'Liberation Sans',sans-serif;color:#000">7</div>
<div class="a" style="left:601.5px;top:291px;width:40px;text-align:right;font:11px/11px 'Liberation Sans',sans-serif;color:#000">8</div>
<div class="a" style="left:639.5px;top:291px;width:40px;text-align:right;font:11px/11px 'Liberation Sans',sans-serif;color:#000">9</div>
<div class="a" style="left:675.2px;top:291px;width:40px;text-align:right;font:11px/11px 'Liberation Sans',sans-serif;color:#000">10</div>
<div class="a" style="left:713.2px;top:291px;width:40px;text-align:right;font:11px/11px 'Liberation Sans',sans-serif;color:#000">11</div>
<div class="a" style="left:751.2px;top:291px;width:40px;text-align:right;font:11px/11px 'Liberation Sans',sans-serif;color:#000">12</div>
<div class="a" style="left:789.2px;top:291px;width:40px;text-align:right;font:11px/11px 'Liberation Sans',sans-serif;color:#000">13</div>
<div class="a" style="left:827.2px;top:291px;width:40px;text-align:right;font:11px/11px 'Liberation Sans',sans-serif;color:#000">14</div>
<div class="a" style="left:864.2px;top:291px;width:40px;text-align:right;font:11px/11px 'Liberation Sans',sans-serif;color:#000">15</div>
<div class="a" style="left:902.2px;top:291px;width:40px;text-align:right;font:11px/11px 'Liberation Sans',sans-serif;color:#000">16</div>
<div class="a" style="left:940.2px;top:291px;width:40px;text-align:right;font:11px/11px 'Liberation Sans',sans-serif;color:#000">17</div>
<div class="a" style="left:978.2px;top:291px;width:40px;text-align:right;font:11px/11px 'Liberation Sans',sans-serif;color:#000">18</div>
<div class="a" style="left:1016.2px;top:291px;width:40px;text-align:right;font:11px/11px 'Liberation Sans',sans-serif;color:#000">19</div>
<div class="a" style="left:1053.2px;top:291px;width:40px;text-align:right;font:11px/11px 'Liberation Sans',sans-serif;color:#000">20</div>
<div class="a" style="left:328px;top:291px;font:11px/11px 'Liberation Sans',sans-serif;color:#000">0</div>
<div class="a" style="left:328px;top:328px;font:11px/11px 'Liberation Sans',sans-serif;color:#000">1</div>
<div class="a" style="left:328px;top:366px;font:11px/11px 'Liberation Sans',sans-serif;color:#000">2</div>
<div class="a" style="left:328px;top:404px;font:11px/11px 'Liberation Sans',sans-serif;color:#000">3</div>
<div class="a" style="left:328px;top:442px;font:11px/11px 'Liberation Sans',sans-serif;color:#000">4</div>
<div class="a" style="left:328px;top:479px;font:11px/11px 'Liberation Sans',sans-serif;color:#000">5</div>
<div class="a" style="left:328px;top:517px;font:11px/11px 'Liberation Sans',sans-serif;color:#000">6</div>
<div class="a" style="left:328px;top:555px;font:11px/11px 'Liberation Sans',sans-serif;color:#000">7</div>
<div class="a" style="left:328px;top:593px;font:11px/11px 'Liberation Sans',sans-serif;color:#000">8</div>
<div class="a" style="left:328px;top:631px;font:11px/11px 'Liberation Sans',sans-serif;color:#000">9</div>
<div class="a" style="left:330px;top:668px;font:11px/11px 'Liberation Sans',sans-serif;color:#000">10</div>
<div class="a" style="left:330px;top:706px;font:11px/11px 'Liberation Sans',sans-serif;color:#000">11</div>
<div class="a" style="left:330px;top:744px;font:11px/11px 'Liberation Sans',sans-serif;color:#000">12</div>
<div class=a style="left:653px;top:320px;width:180px;height:27px;background:#fff;border:1px solid #c8dcc8"></div>
<div class="a tt" style="left:684px;top:322px;font:26px/20px 'Liberation Sans',sans-serif;letter-spacing:4px;-webkit-text-stroke:1.1px;white-space:nowrap">库位示意图</div>
<div class="a" style="left:443px;top:373px;width:75px;height:20px;border:1px solid #000;background:#fff;text-align:center;font:11px/18px 'Liberation Sans',sans-serif">0101</div>
<div class="a" style="left:523px;top:373px;width:75px;height:20px;border:1px solid #000;background:#fff;text-align:center;font:11px/18px 'Liberation Sans',sans-serif">0102</div>
<div class="a" style="left:443px;top:398px;width:75px;height:20px;border:1px solid #000;background:#fff;text-align:center;font:11px/18px 'Liberation Sans',sans-serif">0201</div>
<div class=a style="left:343px;top:606px;width:748px;height:16px;background:#0000f0;"></div>
<div class=a style="left:343px;top:624px;width:748px;height:16px;background:#fddbcd;"></div>
<div class=a style="left:343px;top:643px;width:748px;height:16px;background:#fddbcd;"></div>
<div class=a style="left:343px;top:661px;width:748px;height:16px;background:#fddbcd;"></div>
<div class=a style="left:343px;top:680px;width:748px;height:15px;background:#fddbcd;"></div>
<div class=a style="left:343px;top:698px;width:748px;height:15px;background:#fddbcd;"></div>
<div class=a style="left:343px;top:716px;width:748px;height:15px;background:#fddbcd;"></div>
<div class="a t" style="left:759px;top:609px;width:400px;text-align:center;color:#fff">Head<b class=ar><span>↑</span><svg width=5 height=11 viewBox='0 0 5 11'><path d='M2.5 1V11M0.5 3.5L2.5 1L4.5 3.5' stroke='currentColor' stroke-width='1.3' fill='none'/></svg></b>,<i class=c>每页顶部的区域</i></div>
<div class="a t" style="left:759px;top:627px;width:400px;text-align:center;color:#000">Title<b class=ar><span>↑</span><svg width=5 height=11 viewBox='0 0 5 11'><path d='M2.5 1V11M0.5 3.5L2.5 1L4.5 3.5' stroke='currentColor' stroke-width='1.3' fill='none'/></svg></b>,<i class=c>第一页抬头下面的区域</i></div>
<div class="a t" style="left:759px;top:645px;width:400px;text-align:center;color:#000">Detail_Head<b class=ar><span>↑</span><svg width=5 height=11 viewBox='0 0 5 11'><path d='M2.5 1V11M0.5 3.5L2.5 1L4.5 3.5' stroke='currentColor' stroke-width='1.3' fill='none'/></svg></b><i class=c>，明细标题区的内容</i></div>
<div class="a t" style="left:759px;top:664px;width:400px;text-align:center;color:#000">Detail<b class=ar><span>↑</span><svg width=5 height=11 viewBox='0 0 5 11'><path d='M2.5 1V11M0.5 3.5L2.5 1L4.5 3.5' stroke='currentColor' stroke-width='1.3' fill='none'/></svg></b><i class=c>，每条明细记录的内容</i></div>
<div class="a t" style="left:759px;top:682px;width:400px;text-align:center;color:#000">Footer<b class=ar><span>↑</span><svg width=5 height=11 viewBox='0 0 5 11'><path d='M2.5 1V11M0.5 3.5L2.5 1L4.5 3.5' stroke='currentColor' stroke-width='1.3' fill='none'/></svg></b><i class=c>，每页的小计区域</i></div>
<div class="a t" style="left:759px;top:700px;width:400px;text-align:center;color:#000">Summary<b class=ar><span>↑</span><svg width=5 height=11 viewBox='0 0 5 11'><path d='M2.5 1V11M0.5 3.5L2.5 1L4.5 3.5' stroke='currentColor' stroke-width='1.3' fill='none'/></svg></b><i class=c>，最后一页总结的区域</i></div>
<div class="a t" style="left:759px;top:718px;width:400px;text-align:center;color:#000">Bottom<b class=ar><span>↑</span><svg width=5 height=11 viewBox='0 0 5 11'><path d='M2.5 1V11M0.5 3.5L2.5 1L4.5 3.5' stroke='currentColor' stroke-width='1.3' fill='none'/></svg></b><i class=c>，每页的底部区域</i></div>
<div class=a style="left:297px;top:605px;width:26px;height:16px;background:#a8c8ee;"></div>
<div class=a style="left:297px;top:621px;width:26px;height:56px;background:#f0f0f0;border:1px solid #7a7a7a"></div>
<svg style="left:303px;top:632px" width="10" height="12" viewBox="0 0 10 12"><path d="M5 0L10 5H7V12H3V5H0Z" fill="#ffa800" stroke="#e08000" stroke-width="0.6"/></svg>
<svg style="left:303px;top:656px" width="10" height="12" viewBox="0 0 10 12"><path d="M5 12L10 7H7V0H3V7H0Z" fill="#ffa800" stroke="#e08000" stroke-width="0.6"/></svg>
<div class=a style="left:1092px;top:283px;width:16px;height:470px;background:#f0f0f0;"></div>
<div class=a style="left:1092px;top:300px;width:15px;height:229px;background:#cdcdcd;"></div>
<svg style="left:1095px;top:289px" width="10" height="6" viewBox="0 0 10 6"><path d="M1.5 5L5 1.5L8.5 5" stroke="#505050" stroke-width="2" fill="none"/></svg>
<svg style="left:1095px;top:741px" width="10" height="6" viewBox="0 0 10 6"><path d="M1 1L5 5L9 1" stroke="#505050" stroke-width="2" fill="none"/></svg>
<div class=a style="left:297px;top:753px;width:795px;height:1px;background:#fff;"></div>
<div class=a style="left:1091px;top:606px;width:1px;height:148px;background:#fff;"></div>
<div class=a style="left:297px;top:754px;width:795px;height:15px;background:#f0f0f0;"></div>
<div class=a style="left:314px;top:754px;width:472px;height:15px;background:#cdcdcd;"></div>
<svg style="left:301px;top:757px" width="6" height="10" viewBox="0 0 6 10"><path d="M5 1L1 5L5 9" stroke="#505050" stroke-width="2" fill="none"/></svg>
<svg style="left:1079px;top:757px" width="6" height="10" viewBox="0 0 6 10"><path d="M1 1L5 5L1 9" stroke="#505050" stroke-width="2" fill="none"/></svg>
<div class=a style="left:1092px;top:754px;width:16px;height:16px;background:#f0f0f0;"></div>
<svg style="left:1096px;top:758px" width="12" height="12" viewBox="0 0 12 12"><rect x="8" y="2" width="1.5" height="1.5" fill="#b0b0b0"/><rect x="5" y="5" width="1.5" height="1.5" fill="#b0b0b0"/><rect x="8" y="5" width="1.5" height="1.5" fill="#b0b0b0"/><rect x="2" y="8" width="1.5" height="1.5" fill="#b0b0b0"/><rect x="5" y="8" width="1.5" height="1.5" fill="#b0b0b0"/><rect x="8" y="8" width="1.5" height="1.5" fill="#b0b0b0"/></svg>
<div class=a style="left:297px;top:769px;width:811px;height:1px;background:#fff;"></div>
<div class=a style="left:1115px;top:200px;width:1px;height:577px;background:#98dcf4;"></div>
<div class=a style="left:219px;top:776px;width:896px;height:1px;background:#98dcf4;"></div>
<script>(function(){var s=document.createElement("span");s.style.cssText="position:absolute;visibility:hidden;font:100px 'Liberation Sans',sans-serif";s.textContent="常";document.body.appendChild(s);if(s.getBoundingClientRect().width>90)document.documentElement.className="cjk";s.remove();})();</script>
</body></html>
